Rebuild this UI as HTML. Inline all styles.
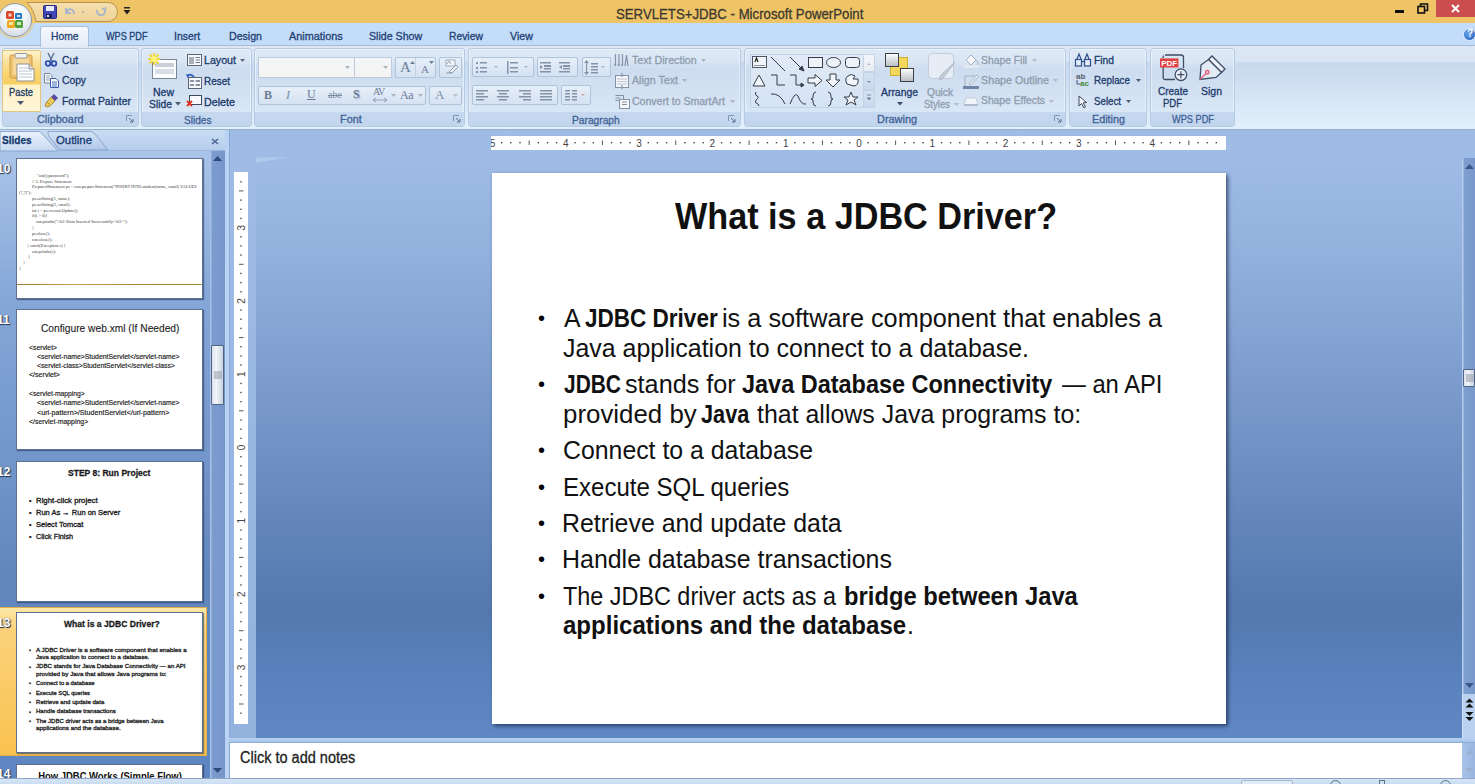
<!DOCTYPE html>
<html><head><meta charset="utf-8">
<style>
*{margin:0;padding:0;box-sizing:border-box}
html,body{width:1475px;height:784px;overflow:hidden;background:#7FA3D6;font-family:"Liberation Sans",sans-serif;position:relative}
.a{position:absolute}
.tx{white-space:nowrap;line-height:1;transform-origin:0 0;-webkit-text-stroke:0.3px currentColor}
svg{position:absolute;overflow:visible}
#title{left:0;top:0;width:1475px;height:23px;background:#EFC466}
#tabs{left:0;top:23px;width:1475px;height:23px;background:#C3DCFA;border-bottom:1px solid #A6BCD6}
#ribbon{left:0;top:46px;width:1475px;height:84px;background:linear-gradient(#DDE7F5 0,#D9E5F4 15px,#C8D9EE 17px,#D3E2F3 55%,#E3F1FC 100%);border-bottom:1px solid #93B0C6}
.grp{top:48px;height:79px;border:1px solid #B5CAE3;border-radius:3px;background:linear-gradient(#DFE9F6 0,#DAE6F4 12px,#CDDCEF 20px,#D3E1F2 45px,#D9E6F5 62px);overflow:hidden;box-shadow:inset 0 0 0 1px rgba(255,255,255,.45)}
.glb{position:absolute;left:0;right:0;bottom:0;height:14px;background:linear-gradient(#C5D8EF,#C1D5EC)}
.box{border:1px solid #AFC3DB;border-radius:2px;background:linear-gradient(#E7EFF9,#D5E2F2)}
#main{left:229px;top:130px;width:1246px;height:608px;background:linear-gradient(#9EBCE6,#93B2DE)}
#inner{left:256px;top:157px;width:1206px;height:581px;background:linear-gradient(#9EBCE6 0,#93B2DE 15%,#7B9BCC 40%,#6688BC 60%,#5479AF 78%,#5A82BD 90%,#6089C4 100%)}
#lpane{left:0;top:130px;width:225px;height:648px;background:linear-gradient(#B0C9EC 0,#86A8D8 25%,#6F93C8 55%,#6287BE 68%,#5E86C2 100%)}
#slide{left:492px;top:173px;width:734px;height:551px;background:#fff;box-shadow:2px 2px 4px rgba(10,25,60,.65)}
.st{left:183px;top:25px;white-space:nowrap;font-size:37.8px;font-weight:bold;color:#111;line-height:1;transform-origin:0 0}
.sl{white-space:nowrap;font-size:25.6px;color:#111;line-height:1;transform-origin:0 0}
.bl{left:46px;font-size:20px;line-height:1;color:#000}
.thumb{left:17px;width:185px;height:139px;background:#fff;box-shadow:0 0 0 1px #5E7192,1px 1px 1px 1px rgba(30,50,90,.55)}
#notes{left:230px;top:743px;width:1232px;height:35px;background:#fff}
#status{left:0;top:778px;width:1475px;height:6px;background:linear-gradient(#D8E6F6,#C9DCF3);border-top:1px solid #8DA6C8}
</style></head><body>
<div id="title" class="a"></div>
<div id="tabs" class="a"></div>
<div id="ribbon" class="a"></div>
<!-- office button -->
<div class="a" style="left:-2px;top:3px;width:34px;height:34px;border-radius:50%;background:radial-gradient(circle at 50% 35%,#FFFFFF 0,#F3F6F9 40%,#D5DCE5 80%,#B8C3D0 100%);border:1px solid #8F98A4;box-shadow:0 0 0 2px rgba(240,200,110,.6)"></div>
<svg style="left:4px;top:9px" width="22" height="22" viewBox="0 0 22 22">
<rect x="2" y="2" width="8" height="8" rx="1.5" fill="#D9472B"/><rect x="4.5" y="4.5" width="3" height="3" fill="#F7D4C2"/>
<rect x="11" y="4" width="7" height="6" rx="1" fill="#2F7CC4"/><rect x="13" y="6" width="3" height="2" fill="#CFE3F5"/>
<rect x="3" y="11" width="8" height="8" rx="1.5" fill="#F2A81C"/><rect x="5" y="13" width="4" height="3" fill="#FBE3A8"/>
<rect x="11" y="11" width="8" height="8" rx="1.5" fill="#4EA23A"/><rect x="13" y="13" width="4" height="3" fill="#CDE9C2"/>
</svg>
<!-- QAT -->
<svg style="left:0;top:0" width="130" height="24" viewBox="0 0 130 24"><defs><linearGradient id="qg" x1="0" y1="0" x2="0" y2="1"><stop offset="0" stop-color="#F6E0AE"/><stop offset="1" stop-color="#EFD297"/></linearGradient></defs><path d="M27 2.5 H108 A9.5 9.5 0 0 1 108 21.5 H36 Q34 9 27 2.5 Z" fill="url(#qg)" stroke="#B99450"/></svg>
<svg style="left:43px;top:5px" width="14" height="14" viewBox="0 0 14 14"><rect x="0.5" y="0.5" width="13" height="13" rx="1" fill="#4447B8" stroke="#2A2C80"/><rect x="3" y="1" width="8" height="5" fill="#E8ECF8"/><rect x="3" y="9" width="6" height="4" fill="#1E2060"/><rect x="4" y="10" width="2" height="2" fill="#DDE"/></svg>
<svg style="left:63px;top:5px" width="14" height="14" viewBox="0 0 14 14"><path d="M3 3 L3 8 L8 8" fill="none" stroke="#A9B6C8" stroke-width="2"/><path d="M3 8 C5 3,11 3,11 9" fill="none" stroke="#A9B6C8" stroke-width="2"/></svg>
<div class="a" style="left:82px;top:11px;width:2px;height:2px;background:#B9B0A0"></div>
<svg style="left:94px;top:5px" width="14" height="14" viewBox="0 0 14 14"><path d="M3 5 C2 12,12 12,11 5" fill="none" stroke="#A9B6C8" stroke-width="2"/><path d="M8 3 L11 5 L12 2" fill="none" stroke="#A9B6C8" stroke-width="1.6"/></svg>
<svg style="left:123px;top:7px" width="8" height="9" viewBox="0 0 8 9"><rect x="1" y="0" width="6" height="1.5" fill="#222"/><path d="M0.5 3 L7.5 3 L4 7.5Z" fill="#222"/></svg>
<!-- window controls -->
<div class="a" style="left:1395px;top:10px;width:9px;height:3px;background:#111"></div>
<svg style="left:1417px;top:3px" width="12" height="11" viewBox="0 0 12 11"><rect x="1" y="3.5" width="6.5" height="6.5" fill="none" stroke="#111" stroke-width="1.6"/><path d="M3.5 3 L3.5 1 L10.5 1 L10.5 7.5 L8 7.5" fill="none" stroke="#111" stroke-width="1.6"/></svg>
<div class="a" style="left:1436px;top:0;width:39px;height:17px;background:#CB4D4D"></div>
<svg style="left:1451px;top:4px" width="9" height="9" viewBox="0 0 9 9"><path d="M1 1 L8 8 M8 1 L1 8" stroke="#fff" stroke-width="2"/></svg>
<!-- help -->
<div class="a" style="left:1463px;top:28px;width:13px;height:13px;border-radius:50%;background:radial-gradient(circle at 40% 35%,#6FA8F0,#1A56B8);border:1px solid #DDE8F6"></div>
<div class="a" style="left:1467px;top:29px;font-size:10px;font-weight:bold;color:#fff;line-height:1">?</div>
<!-- Home tab -->
<div class="a" style="left:40px;top:26px;width:49px;height:21px;border:1px solid #A9C0DA;border-bottom:none;border-radius:3px 3px 0 0;background:linear-gradient(#F6F9FD,#E2EBF7)"></div>
<!-- groups -->
<div class="a grp" style="left:2px;width:137px"><div class="glb"></div></div>
<div class="a grp" style="left:141px;width:111px"><div class="glb"></div></div>
<div class="a grp" style="left:254px;width:211px"><div class="glb"></div></div>
<div class="a grp" style="left:468px;width:273px"><div class="glb"></div></div>
<div class="a grp" style="left:744px;width:322px"><div class="glb"></div></div>
<div class="a grp" style="left:1069px;width:78px"><div class="glb"></div></div>
<div class="a grp" style="left:1150px;width:85px"><div class="glb"></div></div>
<!-- Clipboard icons -->
<div class="a" style="left:2px;top:50px;width:39px;height:62px;border:1px solid #E3C67E;border-radius:2px;background:linear-gradient(#FFF3CC 0,#FBE1A0 10px,#F9D672 22px,#F7CF62 33px,#FFF2C7 34px,#FFF6D8 100%)"></div>
<svg style="left:9px;top:53px" width="26" height="29" viewBox="0 0 26 29">
<rect x="1" y="2" width="22" height="23" rx="1.5" fill="#F0C26E" stroke="#C99A48"/>
<rect x="4" y="5" width="16" height="17" fill="#F6D79C"/>
<rect x="6" y="0.5" width="12" height="4.5" rx="1" fill="#F2F2F2" stroke="#9A9A9A"/>
<path d="M8 11 L20 11 L25 16 L25 28 L8 28 Z" fill="#FFFFFF" stroke="#8F8F8F"/>
<path d="M20 11 L20 16 L25 16" fill="#DDD" stroke="#8F8F8F"/>
<path d="M10 15 H19 M10 18 H23 M10 21 H23 M10 24 H23" stroke="#B8C4D4" stroke-width="1"/>
</svg>
<svg style="left:17px;top:101px" width="7" height="4" viewBox="0 0 7 4"><path d="M0 0 H7 L3.5 4Z" fill="#4A5A70"/></svg>
<svg style="left:45px;top:53px" width="12" height="14" viewBox="0 0 12 14"><path d="M3 0 L7 8 M9 0 L5 8" stroke="#5B6F8C" stroke-width="1.4"/><circle cx="3" cy="10.5" r="2.3" fill="none" stroke="#2F4FB0" stroke-width="1.8"/><circle cx="9" cy="10.5" r="2.3" fill="none" stroke="#2F4FB0" stroke-width="1.8"/></svg>
<svg style="left:44px;top:73px" width="15" height="15" viewBox="0 0 15 15"><path d="M0.5 0.5 H6 L8 2.5 V10 H0.5Z" fill="#F4F6FA" stroke="#7A879A"/><path d="M2 3 H6 M2 5 H6 M2 7 H6" stroke="#9AA6B8"/><path d="M6.5 5.5 H12 L14.5 8 V14.5 H6.5Z" fill="#F8FAFD" stroke="#3A5FA8"/><path d="M8 9 H13 M8 11 H13 M8 13 H13" stroke="#4A6FB8"/></svg>
<svg style="left:44px;top:93px" width="15" height="15" viewBox="0 0 15 15"><path d="M10 1 L14 5 L11 8 L7 4Z" fill="#5B4AA8"/><path d="M7 4 L11 8 L6 13 Q3 15 1 13 L2 10Z" fill="#E8C85A" stroke="#9A7A2A" stroke-width=".8"/><path d="M3 9 L7 13" stroke="#B89530"/></svg>
<!-- dialog launchers -->
<svg style="left:126px;top:115px" width="8" height="8" viewBox="0 0 8 8"><path d="M0.5 6 V0.5 H6" fill="none" stroke="#8096B5"/><path d="M3 3 L7 7 M4 7 H7 V4" fill="none" stroke="#5C7394"/></svg>
<svg style="left:453px;top:115px" width="8" height="8" viewBox="0 0 8 8"><path d="M0.5 6 V0.5 H6" fill="none" stroke="#8096B5"/><path d="M3 3 L7 7 M4 7 H7 V4" fill="none" stroke="#5C7394"/></svg>
<svg style="left:728px;top:115px" width="8" height="8" viewBox="0 0 8 8"><path d="M0.5 6 V0.5 H6" fill="none" stroke="#8096B5"/><path d="M3 3 L7 7 M4 7 H7 V4" fill="none" stroke="#5C7394"/></svg>
<svg style="left:1054px;top:115px" width="8" height="8" viewBox="0 0 8 8"><path d="M0.5 6 V0.5 H6" fill="none" stroke="#8096B5"/><path d="M3 3 L7 7 M4 7 H7 V4" fill="none" stroke="#5C7394"/></svg>
<!-- Slides icons -->
<svg style="left:148px;top:53px" width="30" height="27" viewBox="0 0 30 27">
<rect x="4.5" y="6.5" width="24" height="19" fill="#FBFCFE" stroke="#7C8696"/>
<rect x="7" y="10" width="19" height="4" fill="#C9CFD8"/><rect x="7" y="16" width="19" height="5" fill="#D9DEE5"/>
<path d="M6 0 L6 12 M0 6 L12 6 M1.5 1.5 L10.5 10.5 M10.5 1.5 L1.5 10.5" stroke="#F2D33A" stroke-width="2"/>
<circle cx="6" cy="6" r="3" fill="#FFF27A"/>
</svg>
<svg style="left:175px;top:102px" width="6" height="4" viewBox="0 0 6 4"><path d="M0 0 H6 L3 3.5Z" fill="#4A5A70"/></svg>
<svg style="left:187px;top:54px" width="15" height="13" viewBox="0 0 15 13"><rect x="0.5" y="0.5" width="14" height="11" fill="#F7F9FC" stroke="#5A6678"/><rect x="2" y="3" width="5" height="7" fill="#A8B0BC"/><path d="M8.5 3.5 H13 M8.5 6 H13 M8.5 8.5 H13" stroke="#6F7A8A"/></svg>
<svg style="left:240px;top:59px" width="5" height="3" viewBox="0 0 5 3"><path d="M0 0 H5 L2.5 3Z" fill="#5A6A80"/></svg>
<svg style="left:186px;top:73px" width="16" height="16" viewBox="0 0 16 16"><rect x="2.5" y="4.5" width="13" height="11" fill="#F7F9FC" stroke="#5A6678"/><path d="M4 8 H8 M9.5 8 H14 M4 12 H8 M9.5 12 H14" stroke="#8A94A2" stroke-width="2"/><path d="M1 3 Q4 0 8 4" fill="none" stroke="#3763C0" stroke-width="1.8"/><path d="M0 1 L1.5 5 L4 2Z" fill="#3763C0"/></svg>
<svg style="left:186px;top:95px" width="16" height="12" viewBox="0 0 16 12"><rect x="3.5" y="0.5" width="12" height="9" fill="#F7F9FC" stroke="#3F4A5C"/><path d="M1 6 L6 11 M6 6 L1 11" stroke="#E0301E" stroke-width="1.8"/></svg>
<!-- Font group -->
<div class="a" style="left:258px;top:57px;width:97px;height:21px;border:1px solid #BCCBDD;background:linear-gradient(#F3F5F8,#F6F4F2)"></div>
<div class="a" style="left:354px;top:57px;width:38px;height:21px;border:1px solid #BCCBDD;background:linear-gradient(#F3F5F8,#F6F4F2)"></div>
<svg style="left:345px;top:66px" width="5" height="3" viewBox="0 0 5 3"><path d="M0 0 H5 L2.5 3Z" fill="#A9B4C2"/></svg>
<svg style="left:383px;top:66px" width="5" height="3" viewBox="0 0 5 3"><path d="M0 0 H5 L2.5 3Z" fill="#A9B4C2"/></svg>
<div class="a box" style="left:395px;top:57px;width:41px;height:21px"></div>
<div class="a" style="left:415px;top:58px;width:1px;height:19px;background:#C5D3E4"></div>
<div class="a box" style="left:439px;top:57px;width:23px;height:21px"></div>
<div class="a" style="left:400px;top:60px;font-family:'Liberation Serif';font-size:15px;color:#6E7F98;line-height:1">A</div>
<svg style="left:410px;top:61px" width="5" height="3" viewBox="0 0 5 3"><path d="M0 3 H5 L2.5 0Z" fill="#6E7F98"/></svg>
<div class="a" style="left:421px;top:64px;font-family:'Liberation Serif';font-size:11px;color:#6E7F98;line-height:1">A</div>
<svg style="left:429px;top:61px" width="5" height="3" viewBox="0 0 5 3"><path d="M0 0 H5 L2.5 3Z" fill="#6E7F98"/></svg>
<svg style="left:443px;top:59px" width="16" height="16" viewBox="0 0 16 16"><rect x="3" y="1" width="9" height="6" fill="#F5F7FA" stroke="#8C9AB0" stroke-width=".8"/><path d="M4 5 L6 2 L8 5" fill="none" stroke="#7F8EA5" stroke-width=".8"/><path d="M6 13 L13 6 L15 8 L9 14Z" fill="#EEF2F8" stroke="#8C9AB0"/><path d="M3 14 H9" stroke="#8C9AB0"/></svg>
<div class="a box" style="left:258px;top:86px;width:168px;height:19px"></div>
<div class="a box" style="left:429px;top:86px;width:33px;height:19px"></div>
<div class="a" style="left:264px;top:89px;font-family:'Liberation Serif';font-weight:bold;font-size:12px;color:#6A7B94;line-height:1">B</div>
<div class="a" style="left:286px;top:89px;font-family:'Liberation Serif';font-style:italic;font-size:12px;color:#7A8AA2;line-height:1">I</div>
<div class="a" style="left:307px;top:88px;font-family:'Liberation Serif';font-size:12px;color:#6A7B94;line-height:1;text-decoration:underline">U</div>
<div class="a" style="left:328px;top:90px;font-family:'Liberation Serif';font-size:10px;color:#7A8AA2;line-height:1;text-decoration:line-through">abe</div>
<div class="a" style="left:353px;top:88px;font-family:'Liberation Serif';font-weight:bold;font-size:12px;color:#6A7B94;line-height:1;text-shadow:1px 1px 1px #9AA8BC">S</div>
<div class="a" style="left:373px;top:87px;font-family:'Liberation Serif';font-size:10px;color:#6A7B94;line-height:1;letter-spacing:-1px">AV</div>
<svg style="left:373px;top:98px" width="14" height="4" viewBox="0 0 14 4"><path d="M0 2 H14 M0 2 L3 0 M0 2 L3 4 M14 2 L11 0 M14 2 L11 4" stroke="#8A98AE" stroke-width=".8"/></svg>
<svg style="left:391px;top:94px" width="5" height="3" viewBox="0 0 5 3"><path d="M0 0 H5 L2.5 3Z" fill="#A9B4C2"/></svg>
<div class="a" style="left:400px;top:89px;font-family:'Liberation Serif';font-size:12px;color:#6A7B94;line-height:1;letter-spacing:-.5px">Aa</div>
<svg style="left:418px;top:94px" width="5" height="3" viewBox="0 0 5 3"><path d="M0 0 H5 L2.5 3Z" fill="#A9B4C2"/></svg>
<div class="a" style="left:435px;top:88px;font-family:'Liberation Serif';font-size:13px;color:#7E8EA6;line-height:1">A</div>
<svg style="left:453px;top:94px" width="5" height="3" viewBox="0 0 5 3"><path d="M0 0 H5 L2.5 3Z" fill="#B8C2CE"/></svg>
<!-- Paragraph group -->
<div class="a box" style="left:472px;top:57px;width:62px;height:20px"></div>
<div class="a box" style="left:537px;top:57px;width:41px;height:20px"></div>
<div class="a box" style="left:582px;top:57px;width:29px;height:20px"></div>
<div class="a box" style="left:472px;top:85px;width:86px;height:20px"></div>
<div class="a box" style="left:561px;top:85px;width:30px;height:20px"></div>
<svg style="left:476px;top:60px" width="140" height="16" viewBox="0 0 140 16" fill="#8593A8">
<rect x="0" y="2" width="2" height="2"/><rect x="0" y="7" width="2" height="2"/><rect x="0" y="11" width="2" height="2"/>
<rect x="4" y="2" width="7" height="1.5"/><rect x="4" y="7" width="7" height="1.5"/><rect x="4" y="11" width="7" height="1.5"/>
<path d="M18 6 H22 L20 8Z" fill="#A8B4C4"/>
<rect x="31" y="1" width="1.5" height="13"/>
<rect x="34" y="2" width="8" height="1.5"/><rect x="34" y="7" width="8" height="1.5"/><rect x="34" y="11" width="8" height="1.5"/>
<path d="M48 6 H52 L50 8Z" fill="#A8B4C4"/>
<rect x="64" y="2" width="11" height="1.5"/><rect x="68" y="5" width="7" height="2"/><rect x="68" y="8" width="7" height="1.5"/><rect x="64" y="11" width="11" height="1.5"/><path d="M64 5 L67 7 L64 9Z"/>
<rect x="83" y="2" width="11" height="1.5"/><rect x="87" y="5" width="7" height="2"/><rect x="87" y="8" width="7" height="1.5"/><rect x="83" y="11" width="11" height="1.5"/><path d="M86 5 L83 7 L86 9Z"/>
<rect x="110" y="1" width="1.2" height="13"/><path d="M108 3 L110.6 0 L113 3Z M108 12 L110.6 15 L113 12Z"/>
<rect x="115" y="3" width="7" height="1.5"/><rect x="115" y="6" width="7" height="1.5"/><rect x="115" y="9" width="7" height="1.5"/><rect x="115" y="12" width="7" height="1.5"/>
<path d="M125 6 H129 L127 8Z" fill="#A8B4C4"/>
</svg>
<svg style="left:476px;top:88px" width="115" height="15" viewBox="0 0 115 15" fill="#8593A8">
<rect x="0" y="2" width="12" height="1.5"/><rect x="0" y="5" width="8" height="1.5"/><rect x="0" y="8" width="12" height="1.5"/><rect x="0" y="11" width="8" height="1.5"/>
<rect x="21" y="2" width="12" height="1.5"/><rect x="23" y="5" width="8" height="1.5"/><rect x="21" y="8" width="12" height="1.5"/><rect x="23" y="11" width="8" height="1.5"/>
<rect x="43" y="2" width="12" height="1.5"/><rect x="47" y="5" width="8" height="1.5"/><rect x="43" y="8" width="12" height="1.5"/><rect x="47" y="11" width="8" height="1.5"/>
<rect x="64" y="2" width="12" height="1.5"/><rect x="64" y="5" width="12" height="1.5"/><rect x="64" y="8" width="12" height="1.5"/><rect x="64" y="11" width="12" height="1.5"/>
<rect x="89" y="2" width="5" height="1.5"/><rect x="89" y="5" width="5" height="1.5"/><rect x="89" y="8" width="5" height="1.5"/><rect x="89" y="11" width="5" height="1.5"/>
<rect x="96" y="2" width="5" height="1.5"/><rect x="96" y="5" width="5" height="1.5"/><rect x="96" y="8" width="5" height="1.5"/><rect x="96" y="11" width="5" height="1.5"/>
<path d="M105 6 H109 L107 8Z" fill="#C8A0A0"/>
</svg>
<svg style="left:614px;top:53px" width="16" height="56" viewBox="0 0 16 56" fill="none" stroke="#8593A8">
<path d="M1.5 1 V13 M5 1 V13 M8.5 1 V13 M1.5 13 l-1 -2 M5 13 l-1 -2 M8.5 13 l-1 -2" stroke-width="1.2"/><path d="M11 13 L12.5 2 L14 13" stroke-width="1.2"/>
<rect x="1.5" y="22.5" width="13" height="12" fill="#F5F7FA"/><path d="M3.5 26 H12.5 M3.5 28.5 H12.5 M3.5 31 H12.5" stroke-dasharray="1 1"/><path d="M8 20 V24 M8 32 V36" stroke-width="1.2"/>
<rect x="5.5" y="46.5" width="10" height="9" fill="#F5F7FA"/><path d="M1.5 42.5 H9.5 V46 M1.5 45 H6 M1.5 47.5 H5" /><path d="M8 49 H13 M8 51.5 H13"/>
</svg>
<svg style="left:701px;top:59px" width="5" height="3" viewBox="0 0 5 3"><path d="M0 0 H5 L2.5 3Z" fill="#A9B4C2"/></svg>
<svg style="left:682px;top:79px" width="5" height="3" viewBox="0 0 5 3"><path d="M0 0 H5 L2.5 3Z" fill="#A9B4C2"/></svg>
<svg style="left:730px;top:100px" width="5" height="3" viewBox="0 0 5 3"><path d="M0 0 H5 L2.5 3Z" fill="#A9B4C2"/></svg>
<!-- Drawing group -->
<div class="a" style="left:750px;top:54px;width:125px;height:54px;border:1px solid #C3D3E6;background:linear-gradient(#E1EAF6,#D5E3F3)"></div>
<div class="a" style="left:863px;top:54px;width:12px;height:18px;background:linear-gradient(#F4F6F9,#E8EDF3);border:1px solid #C8D5E5"></div>
<div class="a" style="left:863px;top:72px;width:12px;height:18px;background:linear-gradient(#D4E1F1,#C9D9EE);border:1px solid #C3D3E6"></div>
<div class="a" style="left:863px;top:90px;width:12px;height:18px;background:linear-gradient(#D4E1F1,#C9D9EE);border:1px solid #C3D3E6"></div>
<svg style="left:866px;top:62px" width="6" height="40" viewBox="0 0 6 40"><path d="M1 3 H5 L3 1Z" fill="#B0BCCB"/><path d="M1 19 H5 L3 21Z" fill="#7E8DA3"/><path d="M1 33 H5 M1 36 H5 L3 38Z" stroke="#7E8DA3" fill="#7E8DA3"/></svg>
<svg style="left:750px;top:54px" width="112" height="54" viewBox="0 0 112 54" fill="none" stroke="#333C48" stroke-width="1">
<rect x="2.5" y="2.5" width="14" height="11" fill="#F2F5FA" stroke="#4A5566"/><path d="M4 11.5 H15" stroke="#8A94A2"/><path d="M5 8 L6.5 4 L8 8" stroke="#222" stroke-width="1.2"/>
<path d="M21 3 L35 17"/>
<path d="M40 3 L52 15"/><path d="M49 15 L54 17 L52 12Z" fill="#333C48"/>
<rect x="58.5" y="3.5" width="14" height="10" fill="#EEF3F9"/>
<ellipse cx="83.5" cy="8.5" rx="7" ry="5" fill="#EEF3F9"/>
<rect x="95.5" y="3.5" width="14" height="10" rx="3" fill="#EEF3F9"/>
<path d="M3 32 L9 21 L15 32Z" fill="#F2F5FA"/>
<path d="M21 21 H27 V31 H35"/>
<path d="M40 21 H46 V31 H52"/><path d="M51 29 L54 31 L51 33Z" fill="#333C48"/>
<path d="M58 24 H65 V20.5 L72 26.5 L65 32.5 V29 H58Z" fill="#F2F5FA"/>
<path d="M80 20 H86 V26 H90 L83 33 L76 26 H80Z" fill="#F2F5FA"/>
<path d="M97 30 Q94 24 98 22 Q101 19 105 22 L103 25 L108 25 Q109 31 104 32Z" fill="#F2F5FA"/>
<path d="M6 38 Q4 41 7 42 Q10 43 6 46 Q4 49 8 50 M8 50 L9 52"/>
<path d="M21 40 Q30 39 35 50"/>
<path d="M40 50 Q45 37 48 42 Q51 51 56 50"/>
<path d="M66 38 Q63 38 63 42 V44 L61 45 L63 46 V48 Q63 52 66 52"/>
<path d="M78 38 Q81 38 81 42 V44 L83 45 L81 46 V48 Q81 52 78 52"/>
<path d="M101 38 L103 43 L108 43 L104 46 L106 51 L101 48 L96 51 L98 46 L94 43 L99 43Z" fill="#F2F5FA"/>
</svg>
<svg style="left:884px;top:52px" width="32" height="31" viewBox="0 0 32 31">
<rect x="6.5" y="5.5" width="17" height="18" fill="#F5D65C" stroke="#D1AE2E"/>
<rect x="1.5" y="1.5" width="13" height="13" fill="url(#gg)" stroke="#3A3F46"/>
<rect x="16.5" y="16.5" width="13" height="13" fill="url(#gg)" stroke="#3A3F46"/>
<defs><linearGradient id="gg" x1="0" y1="0" x2="0" y2="1"><stop offset="0" stop-color="#FDFDFD"/><stop offset="1" stop-color="#B9BEC5"/></linearGradient></defs>
</svg>
<svg style="left:897px;top:102px" width="6" height="4" viewBox="0 0 6 4"><path d="M0 0 H6 L3 3.5Z" fill="#3A4C6A"/></svg>
<svg style="left:927px;top:52px" width="30" height="30" viewBox="0 0 30 30"><rect x="1.5" y="1.5" width="25" height="25" rx="4" fill="#E6EDF6" stroke="#C3CDDA"/><path d="M28 10 L17 25 L14 28 L12 27 L14 23Z" fill="#C4CCD8" stroke="#B3BCCA"/></svg>
<svg style="left:954px;top:103px" width="5" height="3" viewBox="0 0 5 3"><path d="M0 0 H5 L2.5 3Z" fill="#B3BDCA"/></svg>
<svg style="left:963px;top:53px" width="18" height="56" viewBox="0 0 18 56" fill="none" stroke="#A3AFC0">
<path d="M3 7 L8 2 L13 7 L8 12Z" fill="#F3F6FA"/><path d="M13 7 Q16 9 15 12" /><rect x="1" y="12" width="15" height="3" fill="#E4EAF2" stroke="none"/>
<path d="M2 33 V23 H12" /><path d="M6 31 L14 22 L15.5 23.5 L7.5 32Z" fill="#F3F6FA"/><rect x="0" y="33" width="16" height="3" fill="#6E85A5" stroke="none"/>
<path d="M1 52 L3 45 H13 L15 52Z" fill="#F1F4F8" stroke="#C5CEDA"/><path d="M1 52 H15" stroke="#AFBACA" stroke-width="2"/>
</svg>
<svg style="left:1032px;top:59px" width="5" height="3" viewBox="0 0 5 3"><path d="M0 0 H5 L2.5 3Z" fill="#B3BDCA"/></svg>
<svg style="left:1053px;top:79px" width="5" height="3" viewBox="0 0 5 3"><path d="M0 0 H5 L2.5 3Z" fill="#B3BDCA"/></svg>
<svg style="left:1049px;top:100px" width="5" height="3" viewBox="0 0 5 3"><path d="M0 0 H5 L2.5 3Z" fill="#B3BDCA"/></svg>
<!-- Editing -->
<svg style="left:1075px;top:53px" width="16" height="14" viewBox="0 0 16 14" fill="none" stroke="#2E4D8A" stroke-width="1.2"><path d="M2 6 L4 1 L6 6 M10 6 L12 1 L14 6"/><rect x="0.5" y="6.5" width="6" height="6.5" fill="#E3ECF8"/><rect x="9.5" y="6.5" width="6" height="6.5" fill="#E3ECF8"/><path d="M6.5 8.5 H9.5"/></svg>
<div class="a" style="left:1076px;top:73px;font-size:8px;color:#4F5A6A;line-height:1;font-weight:bold">ab</div>
<div class="a" style="left:1080px;top:80px;font-size:8px;color:#3E8A3A;line-height:1;font-weight:bold">ac</div>
<svg style="left:1076px;top:80px" width="5" height="6" viewBox="0 0 5 6"><path d="M1 0 V4 H4" stroke="#3E5A8A" fill="none"/></svg>
<svg style="left:1136px;top:79px" width="5" height="3" viewBox="0 0 5 3"><path d="M0 0 H5 L2.5 3Z" fill="#4A5A72"/></svg>
<svg style="left:1078px;top:95px" width="10" height="14" viewBox="0 0 10 14"><path d="M1 1 L1 11 L3.5 8.5 L6 13 L7.5 12 L5.2 7.8 L8.5 7.5Z" fill="#F6F8FB" stroke="#3B4656"/></svg>
<svg style="left:1126px;top:100px" width="5" height="3" viewBox="0 0 5 3"><path d="M0 0 H5 L2.5 3Z" fill="#4A5A72"/></svg>
<!-- WPS PDF -->
<svg style="left:1155px;top:50px" width="75" height="35" viewBox="0 0 75 35" fill="none" stroke="#3E4D66" stroke-width="1.3">
<path d="M10 5 H26 Q28.5 5 28.5 7.5 V18"/><path d="M8.2 17 V28 Q8.2 29.5 10 29.5 H20"/><path d="M8.2 5.5 V8"/>
<rect x="5" y="8.4" width="18.4" height="9.1" fill="#DF4242" stroke="none"/>
<text x="6.2" y="16.2" font-family="Liberation Sans" font-size="8" font-weight="bold" fill="#fff" stroke="none">PDF</text>
<circle cx="25.9" cy="24.7" r="5.8" fill="#E8EFF8"/><path d="M25.9 21.2 V28.2 M22.4 24.7 H29.4" stroke-width="1.2"/>
<path d="M53.5 9.5 L57 6 L70 19 L66.5 22.5Z" fill="#EDF2F9"/>
<path d="M53.5 9.5 L66.5 22.5 L61 27.5 L45 29.5 L46 15 Z" fill="#E3EBF5"/>
<path d="M45 29.5 L51 23.5" stroke="#E3607A"/><circle cx="52.3" cy="22.2" r="1.8" stroke="#E3607A" fill="#F5C6D0"/>
</svg>

<div id="lpane" class="a"></div>
<div id="main" class="a"></div>
<div id="inner" class="a"></div>
<!-- left pane header -->
<div class="a" style="left:0;top:130px;width:225px;height:21px;background:linear-gradient(#C9DCF3,#B6CEEC);border-bottom:1px solid #9DB8DD"></div>
<svg style="left:0;top:130px" width="225" height="21" viewBox="0 0 225 21">
<path d="M48 1.5 H90 Q93 1.5 95 4 L108 20 H60 L50 8 Q48 5 48 3Z" fill="url(#og)" stroke="#8AA6CC"/>
<path d="M0 1.5 H40 L58 21 H0Z" fill="url(#sg)" stroke="#8AA6CC"/>
<defs><linearGradient id="sg" x1="0" y1="0" x2="0" y2="1"><stop offset="0" stop-color="#EAF2FC"/><stop offset="1" stop-color="#C8DAF1"/></linearGradient>
<linearGradient id="og" x1="0" y1="0" x2="0" y2="1"><stop offset="0" stop-color="#D3E2F5"/><stop offset="1" stop-color="#AFC7E7"/></linearGradient></defs>
</svg>
<svg style="left:211px;top:138px" width="8" height="7" viewBox="0 0 8 7"><path d="M1 1 L7 6 M7 1 L1 6" stroke="#4A6796" stroke-width="1.6"/></svg>
<!-- pane content bg -->
<!-- pane scrollbar -->
<div class="a" style="left:210px;top:151px;width:15px;height:627px;background:linear-gradient(90deg,#A7C1E6 0,#A7C1E6 1px,#7C9CCF 2px,#7696CA 100%)"></div>
<svg style="left:213px;top:156px" width="9" height="5" viewBox="0 0 9 5"><path d="M0 5 L4.5 0 L9 5Z" fill="#2F4A78"/></svg>
<svg style="left:213px;top:768px" width="9" height="5" viewBox="0 0 9 5"><path d="M0 0 L4.5 5 L9 0Z" fill="#2F4A78"/></svg>
<div class="a" style="left:211px;top:345px;width:13px;height:60px;border:1px solid #4F6488;border-radius:1px;background:linear-gradient(90deg,#DDE3EC,#F2F5F9 40%,#C8D2DF)"></div>
<svg style="left:214px;top:371px" width="8" height="8" viewBox="0 0 8 8"><path d="M0 1 H8 M0 3 H8 M0 5 H8 M0 7 H8" stroke="#8C96A6"/></svg>
<!-- strip -->
<div class="a" style="left:225px;top:130px;width:4px;height:648px;background:#BAD3F2"></div>
<div class="a" style="left:229px;top:130px;width:1px;height:608px;background:#88A8D6"></div>
<!-- selection highlight -->
<div class="a" style="left:0;top:607px;width:207px;height:149px;background:linear-gradient(#FDE7A6 0,#FBD27A 15%,#F9C24F 100%);border:1px solid #E2AE4A;border-left:none"></div>
<!-- thumbnails -->
<div class="a thumb" style="top:159px;overflow:hidden">
<div class="a" style="left:0;top:124.5px;width:185px;height:1.6px;background:linear-gradient(90deg,#9C7A3A,#C9A052 30%,#B08A40 60%,#A88A48)"></div>
<div class="a" style="left:19.8px;top:13.5px;font-family:'Liberation Serif';font-size:5px;line-height:1;color:#3a3a3a;white-space:nowrap;transform:scaleX(.867);transform-origin:0 0">"out();password");</div>
<div class="a" style="left:15.0px;top:19.8px;font-family:'Liberation Serif';font-size:5px;line-height:1;color:#3a3a3a;white-space:nowrap;transform:scaleX(.867);transform-origin:0 0">// 3. Prepare Statement</div>
<div class="a" style="left:15.0px;top:25.3px;font-family:'Liberation Serif';font-size:5px;line-height:1;color:#3a3a3a;white-space:nowrap;transform:scaleX(.867);transform-origin:0 0">PreparedStatement ps = con.prepareStatement("INSERT INTO student(name, email) VALUES</div>
<div class="a" style="left:1.6px;top:31.3px;font-family:'Liberation Serif';font-size:5px;line-height:1;color:#3a3a3a;white-space:nowrap;transform:scaleX(.867);transform-origin:0 0">(?,?)");</div>
<div class="a" style="left:15.0px;top:37.4px;font-family:'Liberation Serif';font-size:5px;line-height:1;color:#3a3a3a;white-space:nowrap;transform:scaleX(.867);transform-origin:0 0">ps.setString(1, name);</div>
<div class="a" style="left:15.0px;top:43.1px;font-family:'Liberation Serif';font-size:5px;line-height:1;color:#3a3a3a;white-space:nowrap;transform:scaleX(.867);transform-origin:0 0">ps.setString(2, email);</div>
<div class="a" style="left:15.0px;top:48.9px;font-family:'Liberation Serif';font-size:5px;line-height:1;color:#3a3a3a;white-space:nowrap;transform:scaleX(.867);transform-origin:0 0">int i = ps.executeUpdate();</div>
<div class="a" style="left:15.0px;top:54.2px;font-family:'Liberation Serif';font-size:5px;line-height:1;color:#3a3a3a;white-space:nowrap;transform:scaleX(.867);transform-origin:0 0">if(i &gt; 0){</div>
<div class="a" style="left:18.8px;top:60.3px;font-family:'Liberation Serif';font-size:5px;line-height:1;color:#3a3a3a;white-space:nowrap;transform:scaleX(.867);transform-origin:0 0">out.println("&lt;h3&gt;Data Inserted Successfully&lt;/h3&gt;");</div>
<div class="a" style="left:15.0px;top:66.1px;font-family:'Liberation Serif';font-size:5px;line-height:1;color:#3a3a3a;white-space:nowrap;transform:scaleX(.867);transform-origin:0 0">}</div>
<div class="a" style="left:15.0px;top:71.8px;font-family:'Liberation Serif';font-size:5px;line-height:1;color:#3a3a3a;white-space:nowrap;transform:scaleX(.867);transform-origin:0 0">ps.close();</div>
<div class="a" style="left:15.0px;top:77.9px;font-family:'Liberation Serif';font-size:5px;line-height:1;color:#3a3a3a;white-space:nowrap;transform:scaleX(.867);transform-origin:0 0">con.close();</div>
<div class="a" style="left:10.2px;top:83.7px;font-family:'Liberation Serif';font-size:5px;line-height:1;color:#3a3a3a;white-space:nowrap;transform:scaleX(.867);transform-origin:0 0">} catch(Exception e) {</div>
<div class="a" style="left:15.0px;top:89.6px;font-family:'Liberation Serif';font-size:5px;line-height:1;color:#3a3a3a;white-space:nowrap;transform:scaleX(.867);transform-origin:0 0">out.println(e);</div>
<div class="a" style="left:10.6px;top:95.4px;font-family:'Liberation Serif';font-size:5px;line-height:1;color:#3a3a3a;white-space:nowrap;transform:scaleX(.867);transform-origin:0 0">}</div>
<div class="a" style="left:6.0px;top:101.1px;font-family:'Liberation Serif';font-size:5px;line-height:1;color:#3a3a3a;white-space:nowrap;transform:scaleX(.867);transform-origin:0 0">}</div>
<div class="a" style="left:1.6px;top:106.8px;font-family:'Liberation Serif';font-size:5px;line-height:1;color:#3a3a3a;white-space:nowrap;transform:scaleX(.867);transform-origin:0 0">}</div>
</div>
<div class="a thumb" style="top:310px;overflow:hidden"></div>
<div class="a thumb" style="top:462px;overflow:hidden"></div>
<div class="a thumb" style="top:613px;overflow:hidden"></div>
<div class="a thumb" style="top:765px;height:20px;overflow:hidden">
<div class="a" style="left:0;top:6px;width:186px;text-align:center;font-size:10.5px;font-weight:bold;color:#111;line-height:1;transform:scaleX(.9)">How JDBC Works (Simple Flow)</div>
</div>
<!-- slide numbers -->
<div class="a" style="left:-3px;top:163px;font-size:12px;font-weight:bold;color:#fff;line-height:1;-webkit-text-stroke:0;text-shadow:1px 1px 1px #22334F,0 0 1px #334A70">10</div>
<div class="a" style="left:-3px;top:314px;font-size:12px;font-weight:bold;color:#fff;line-height:1;-webkit-text-stroke:0;text-shadow:1px 1px 1px #22334F,0 0 1px #334A70">11</div>
<div class="a" style="left:-3px;top:466px;font-size:12px;font-weight:bold;color:#fff;line-height:1;-webkit-text-stroke:0;text-shadow:1px 1px 1px #22334F,0 0 1px #334A70">12</div>
<div class="a" style="left:-3px;top:617px;font-size:12px;font-weight:bold;color:#fff;line-height:1;-webkit-text-stroke:0;text-shadow:1px 1px 1px #22334F,0 0 1px #334A70">13</div>
<div class="a" style="left:-3px;top:768px;font-size:12px;font-weight:bold;color:#fff;line-height:1;-webkit-text-stroke:0;text-shadow:1px 1px 1px #22334F,0 0 1px #334A70">14</div>

<!-- rulers -->
<div class="a" style="left:491px;top:136px;width:735px;height:14px;background:#fff"></div>
<div class="a" style="left:234px;top:172px;width:14px;height:552px;background:#fff"></div>
<svg style="left:491px;top:136px;overflow:hidden" width="735" height="14" viewBox="0 0 735 14" id="hr"><text x="1.5" y="10.5" font-family="Liberation Sans" font-size="10" fill="#444" text-anchor="middle">5</text><rect x="10.0" y="6" width="1.4" height="1.4" fill="#444"/><rect x="19.1" y="6" width="1.4" height="1.4" fill="#444"/><rect x="28.3" y="6" width="1.4" height="1.4" fill="#444"/><rect x="37.7" y="4.5" width="1" height="4.5" fill="#555"/><rect x="46.6" y="6" width="1.4" height="1.4" fill="#444"/><rect x="55.8" y="6" width="1.4" height="1.4" fill="#444"/><rect x="64.9" y="6" width="1.4" height="1.4" fill="#444"/><text x="74.8" y="10.5" font-family="Liberation Sans" font-size="10" fill="#444" text-anchor="middle">4</text><rect x="83.3" y="6" width="1.4" height="1.4" fill="#444"/><rect x="92.4" y="6" width="1.4" height="1.4" fill="#444"/><rect x="101.6" y="6" width="1.4" height="1.4" fill="#444"/><rect x="110.9" y="4.5" width="1" height="4.5" fill="#555"/><rect x="119.9" y="6" width="1.4" height="1.4" fill="#444"/><rect x="129.1" y="6" width="1.4" height="1.4" fill="#444"/><rect x="138.2" y="6" width="1.4" height="1.4" fill="#444"/><text x="148.1" y="10.5" font-family="Liberation Sans" font-size="10" fill="#444" text-anchor="middle">3</text><rect x="156.6" y="6" width="1.4" height="1.4" fill="#444"/><rect x="165.7" y="6" width="1.4" height="1.4" fill="#444"/><rect x="174.9" y="6" width="1.4" height="1.4" fill="#444"/><rect x="184.2" y="4.5" width="1" height="4.5" fill="#555"/><rect x="193.2" y="6" width="1.4" height="1.4" fill="#444"/><rect x="202.4" y="6" width="1.4" height="1.4" fill="#444"/><rect x="211.5" y="6" width="1.4" height="1.4" fill="#444"/><text x="221.4" y="10.5" font-family="Liberation Sans" font-size="10" fill="#444" text-anchor="middle">2</text><rect x="229.9" y="6" width="1.4" height="1.4" fill="#444"/><rect x="239.0" y="6" width="1.4" height="1.4" fill="#444"/><rect x="248.2" y="6" width="1.4" height="1.4" fill="#444"/><rect x="257.6" y="4.5" width="1" height="4.5" fill="#555"/><rect x="266.5" y="6" width="1.4" height="1.4" fill="#444"/><rect x="275.7" y="6" width="1.4" height="1.4" fill="#444"/><rect x="284.8" y="6" width="1.4" height="1.4" fill="#444"/><text x="294.7" y="10.5" font-family="Liberation Sans" font-size="10" fill="#444" text-anchor="middle">1</text><rect x="303.2" y="6" width="1.4" height="1.4" fill="#444"/><rect x="312.3" y="6" width="1.4" height="1.4" fill="#444"/><rect x="321.5" y="6" width="1.4" height="1.4" fill="#444"/><rect x="330.9" y="4.5" width="1" height="4.5" fill="#555"/><rect x="339.8" y="6" width="1.4" height="1.4" fill="#444"/><rect x="349.0" y="6" width="1.4" height="1.4" fill="#444"/><rect x="358.1" y="6" width="1.4" height="1.4" fill="#444"/><text x="368.0" y="10.5" font-family="Liberation Sans" font-size="10" fill="#444" text-anchor="middle">0</text><rect x="376.5" y="6" width="1.4" height="1.4" fill="#444"/><rect x="385.6" y="6" width="1.4" height="1.4" fill="#444"/><rect x="394.8" y="6" width="1.4" height="1.4" fill="#444"/><rect x="404.1" y="4.5" width="1" height="4.5" fill="#555"/><rect x="413.1" y="6" width="1.4" height="1.4" fill="#444"/><rect x="422.3" y="6" width="1.4" height="1.4" fill="#444"/><rect x="431.4" y="6" width="1.4" height="1.4" fill="#444"/><text x="441.3" y="10.5" font-family="Liberation Sans" font-size="10" fill="#444" text-anchor="middle">1</text><rect x="449.8" y="6" width="1.4" height="1.4" fill="#444"/><rect x="458.9" y="6" width="1.4" height="1.4" fill="#444"/><rect x="468.1" y="6" width="1.4" height="1.4" fill="#444"/><rect x="477.4" y="4.5" width="1" height="4.5" fill="#555"/><rect x="486.4" y="6" width="1.4" height="1.4" fill="#444"/><rect x="495.6" y="6" width="1.4" height="1.4" fill="#444"/><rect x="504.7" y="6" width="1.4" height="1.4" fill="#444"/><text x="514.6" y="10.5" font-family="Liberation Sans" font-size="10" fill="#444" text-anchor="middle">2</text><rect x="523.1" y="6" width="1.4" height="1.4" fill="#444"/><rect x="532.2" y="6" width="1.4" height="1.4" fill="#444"/><rect x="541.4" y="6" width="1.4" height="1.4" fill="#444"/><rect x="550.8" y="4.5" width="1" height="4.5" fill="#555"/><rect x="559.7" y="6" width="1.4" height="1.4" fill="#444"/><rect x="568.9" y="6" width="1.4" height="1.4" fill="#444"/><rect x="578.0" y="6" width="1.4" height="1.4" fill="#444"/><text x="587.9" y="10.5" font-family="Liberation Sans" font-size="10" fill="#444" text-anchor="middle">3</text><rect x="596.4" y="6" width="1.4" height="1.4" fill="#444"/><rect x="605.5" y="6" width="1.4" height="1.4" fill="#444"/><rect x="614.7" y="6" width="1.4" height="1.4" fill="#444"/><rect x="624.0" y="4.5" width="1" height="4.5" fill="#555"/><rect x="633.0" y="6" width="1.4" height="1.4" fill="#444"/><rect x="642.2" y="6" width="1.4" height="1.4" fill="#444"/><rect x="651.3" y="6" width="1.4" height="1.4" fill="#444"/><text x="661.2" y="10.5" font-family="Liberation Sans" font-size="10" fill="#444" text-anchor="middle">4</text><rect x="669.7" y="6" width="1.4" height="1.4" fill="#444"/><rect x="678.8" y="6" width="1.4" height="1.4" fill="#444"/><rect x="688.0" y="6" width="1.4" height="1.4" fill="#444"/><rect x="697.3" y="4.5" width="1" height="4.5" fill="#555"/><rect x="706.3" y="6" width="1.4" height="1.4" fill="#444"/><rect x="715.5" y="6" width="1.4" height="1.4" fill="#444"/><rect x="724.6" y="6" width="1.4" height="1.4" fill="#444"/></svg>
<svg style="left:234px;top:172px" width="14" height="552" viewBox="0 0 14 552" id="vr"><rect x="6.3" y="9.1" width="1.4" height="1.4" fill="#444"/><rect x="5" y="18.4" width="4.5" height="1" fill="#555"/><rect x="6.3" y="27.4" width="1.4" height="1.4" fill="#444"/><rect x="6.3" y="36.6" width="1.4" height="1.4" fill="#444"/><rect x="6.3" y="45.7" width="1.4" height="1.4" fill="#444"/><text x="0" y="0" transform="translate(10.5,55.6) rotate(-90)" font-family="Liberation Sans" font-size="10" fill="#444" text-anchor="middle">3</text><rect x="6.3" y="64.1" width="1.4" height="1.4" fill="#444"/><rect x="6.3" y="73.2" width="1.4" height="1.4" fill="#444"/><rect x="6.3" y="82.4" width="1.4" height="1.4" fill="#444"/><rect x="5" y="91.8" width="4.5" height="1" fill="#555"/><rect x="6.3" y="100.7" width="1.4" height="1.4" fill="#444"/><rect x="6.3" y="109.9" width="1.4" height="1.4" fill="#444"/><rect x="6.3" y="119.0" width="1.4" height="1.4" fill="#444"/><text x="0" y="0" transform="translate(10.5,128.9) rotate(-90)" font-family="Liberation Sans" font-size="10" fill="#444" text-anchor="middle">2</text><rect x="6.3" y="137.4" width="1.4" height="1.4" fill="#444"/><rect x="6.3" y="146.5" width="1.4" height="1.4" fill="#444"/><rect x="6.3" y="155.7" width="1.4" height="1.4" fill="#444"/><rect x="5" y="165.1" width="4.5" height="1" fill="#555"/><rect x="6.3" y="174.0" width="1.4" height="1.4" fill="#444"/><rect x="6.3" y="183.2" width="1.4" height="1.4" fill="#444"/><rect x="6.3" y="192.3" width="1.4" height="1.4" fill="#444"/><text x="0" y="0" transform="translate(10.5,202.2) rotate(-90)" font-family="Liberation Sans" font-size="10" fill="#444" text-anchor="middle">1</text><rect x="6.3" y="210.7" width="1.4" height="1.4" fill="#444"/><rect x="6.3" y="219.8" width="1.4" height="1.4" fill="#444"/><rect x="6.3" y="229.0" width="1.4" height="1.4" fill="#444"/><rect x="5" y="238.3" width="4.5" height="1" fill="#555"/><rect x="6.3" y="247.3" width="1.4" height="1.4" fill="#444"/><rect x="6.3" y="256.5" width="1.4" height="1.4" fill="#444"/><rect x="6.3" y="265.6" width="1.4" height="1.4" fill="#444"/><text x="0" y="0" transform="translate(10.5,275.5) rotate(-90)" font-family="Liberation Sans" font-size="10" fill="#444" text-anchor="middle">0</text><rect x="6.3" y="284.0" width="1.4" height="1.4" fill="#444"/><rect x="6.3" y="293.1" width="1.4" height="1.4" fill="#444"/><rect x="6.3" y="302.3" width="1.4" height="1.4" fill="#444"/><rect x="5" y="311.6" width="4.5" height="1" fill="#555"/><rect x="6.3" y="320.6" width="1.4" height="1.4" fill="#444"/><rect x="6.3" y="329.8" width="1.4" height="1.4" fill="#444"/><rect x="6.3" y="338.9" width="1.4" height="1.4" fill="#444"/><text x="0" y="0" transform="translate(10.5,348.8) rotate(-90)" font-family="Liberation Sans" font-size="10" fill="#444" text-anchor="middle">1</text><rect x="6.3" y="357.3" width="1.4" height="1.4" fill="#444"/><rect x="6.3" y="366.4" width="1.4" height="1.4" fill="#444"/><rect x="6.3" y="375.6" width="1.4" height="1.4" fill="#444"/><rect x="5" y="384.9" width="4.5" height="1" fill="#555"/><rect x="6.3" y="393.9" width="1.4" height="1.4" fill="#444"/><rect x="6.3" y="403.1" width="1.4" height="1.4" fill="#444"/><rect x="6.3" y="412.2" width="1.4" height="1.4" fill="#444"/><text x="0" y="0" transform="translate(10.5,422.1) rotate(-90)" font-family="Liberation Sans" font-size="10" fill="#444" text-anchor="middle">2</text><rect x="6.3" y="430.6" width="1.4" height="1.4" fill="#444"/><rect x="6.3" y="439.7" width="1.4" height="1.4" fill="#444"/><rect x="6.3" y="448.9" width="1.4" height="1.4" fill="#444"/><rect x="5" y="458.2" width="4.5" height="1" fill="#555"/><rect x="6.3" y="467.2" width="1.4" height="1.4" fill="#444"/><rect x="6.3" y="476.4" width="1.4" height="1.4" fill="#444"/><rect x="6.3" y="485.5" width="1.4" height="1.4" fill="#444"/><text x="0" y="0" transform="translate(10.5,495.4) rotate(-90)" font-family="Liberation Sans" font-size="10" fill="#444" text-anchor="middle">3</text><rect x="6.3" y="503.9" width="1.4" height="1.4" fill="#444"/><rect x="6.3" y="513.0" width="1.4" height="1.4" fill="#444"/><rect x="6.3" y="522.2" width="1.4" height="1.4" fill="#444"/><rect x="5" y="531.5" width="4.5" height="1" fill="#555"/><rect x="6.3" y="540.5" width="1.4" height="1.4" fill="#444"/></svg>
<!-- triangle artifact -->
<svg style="left:256px;top:156px" width="40" height="12" viewBox="0 0 40 12"><path d="M0 1.5 L32 1 L0 7Z" fill="#B4CDEE" opacity=".7"/></svg>
<!-- right scrollbar -->
<div class="a" style="left:1462px;top:158px;width:13px;height:536px;background:linear-gradient(90deg,#B5CDEB 0,#B5CDEB 1px,#7E9FD0 2px,#7898CB 100%)"></div>
<svg style="left:1465px;top:164px" width="9" height="5" viewBox="0 0 9 5"><path d="M0 5 L4.5 0 L9 5Z" fill="#3A5686"/></svg>
<svg style="left:1465px;top:683px" width="9" height="5" viewBox="0 0 9 5"><path d="M0 0 L4.5 5 L9 0Z" fill="#3A5686"/></svg>
<div class="a" style="left:1463px;top:369px;width:12px;height:18px;border:1px solid #4F6488;border-radius:1px;background:linear-gradient(90deg,#DDE3EC,#F2F5F9 40%,#C8D2DF)"></div>
<svg style="left:1466px;top:374px" width="8" height="8" viewBox="0 0 8 8"><path d="M0 1 H8 M0 3 H8 M0 5 H8 M0 7 H8" stroke="#8C96A6"/></svg>
<div class="a" style="left:1462px;top:694px;width:13px;height:44px;background:#BAD2EF;border-left:1px solid #D2E2F6"></div>
<svg style="left:1465px;top:698px" width="9" height="24" viewBox="0 0 9 24" fill="#111"><path d="M0.5 4.5 L4.5 0.5 L8.5 4.5Z M0.5 9.5 L4.5 5.5 L8.5 9.5Z M0.5 14 L4.5 18 L8.5 14Z M0.5 19 L4.5 23 L8.5 19Z"/></svg>
<!-- band between main and notes -->
<div class="a" style="left:229px;top:738px;width:1246px;height:5px;background:linear-gradient(#B9D3F2,#A7C4EA);border-bottom:1px solid #8EAED8"></div>
<!-- notes scrollbar -->
<div class="a" style="left:1462px;top:743px;width:13px;height:35px;background:linear-gradient(90deg,#A9C3E8,#98B5E0)"></div>
<svg style="left:1465px;top:749px" width="9" height="24" viewBox="0 0 9 24" fill="#9BB0CE"><path d="M0.5 5 L4.5 1 L8.5 5Z M0.5 19 L4.5 23 L8.5 19Z"/></svg>

<div id="slide" class="a">
<div class="a st" style="transform:scaleX(0.905)">What is a JDBC Driver?</div>
<div class="a bl" style="top:135.0px">&#8226;</div>
<div class="a bl" style="top:201.0px">&#8226;</div>
<div class="a bl" style="top:267.0px">&#8226;</div>
<div class="a bl" style="top:303.5px">&#8226;</div>
<div class="a bl" style="top:340.0px">&#8226;</div>
<div class="a bl" style="top:376.0px">&#8226;</div>
<div class="a bl" style="top:412.5px">&#8226;</div>
<div class="a sl" style="left:72.40px;top:133px;transform:scaleX(0.9700)">A</div>
<div class="a sl" style="left:93.40px;top:133px;font-weight:bold;transform:scaleX(0.8800)">JDBC Driver</div>
<div class="a sl" style="left:230.02px;top:133px;transform:scaleX(0.9880)">is a software component that enables a</div>
<div class="a sl" style="left:71.43px;top:163px;transform:scaleX(0.9747)">Java application to connect to a database.</div>
<div class="a sl" style="left:72.20px;top:199px;font-weight:bold;transform:scaleX(0.8174)">JDBC</div>
<div class="a sl" style="left:133.41px;top:199px;transform:scaleX(0.9856)">stands for</div>
<div class="a sl" style="left:249.60px;top:199px;font-weight:bold;transform:scaleX(0.9166)">Java Database Connectivity</div>
<div class="a sl" style="left:569.50px;top:199px;transform:scaleX(0.9292)">&#8212; an API</div>
<div class="a sl" style="left:71.28px;top:229px;transform:scaleX(1.0108)">provided by</div>
<div class="a sl" style="left:209.30px;top:229px;font-weight:bold;transform:scaleX(0.8491)">Java</div>
<div class="a sl" style="left:264.60px;top:229px;transform:scaleX(0.9740)">that allows Java programs to:</div>
<div class="a sl" style="left:71.43px;top:265px;transform:scaleX(0.9706)">Connect to a database</div>
<div class="a sl" style="left:70.52px;top:301.5px;transform:scaleX(0.9395)">Execute SQL queries</div>
<div class="a sl" style="left:70.45px;top:338px;transform:scaleX(0.9731)">Retrieve and update data</div>
<div class="a sl" style="left:70.45px;top:374px;transform:scaleX(0.9744)">Handle database transactions</div>
<div class="a sl" style="left:71.49px;top:410.5px;transform:scaleX(0.9138)">The JDBC driver acts as a</div>
<div class="a sl" style="left:352.34px;top:410.5px;font-weight:bold;transform:scaleX(0.9288)">bridge between Java</div>
<div class="a sl" style="left:71.46px;top:440px;font-weight:bold;transform:scaleX(0.9387)">applications and the database</div>
<div class="a sl" style="left:414.66px;top:440px;transform:scaleX(0.9700)">.</div>
</div>
<div id="notes" class="a"></div>
<div id="status" class="a"></div>
<!-- status bar bits -->
<div class="a" style="left:1241px;top:780px;width:52px;height:8px;border:1px solid #A3B6D0;border-radius:2px;background:#E2ECF8"></div>
<div class="a" style="left:1330px;top:780px;width:11px;height:11px;border:1px solid #5D6F8C;border-radius:50%"></div>
<div class="a" style="left:1379px;top:780px;width:6px;height:8px;border:1px solid #5D6F8C"></div>
<div class="a" style="left:1440px;top:780px;width:11px;height:11px;border:1px solid #5D6F8C;border-radius:50%"></div>

<div class="a tx" style="left:615.6px;top:5.5px;font-size:15px;color:#3B3830;transform:scaleX(0.880)">SERVLETS+JDBC - Microsoft PowerPoint</div>
<div class="a tx" style="left:50.5px;top:30.9px;font-size:10.5px;color:#1E3F73;transform:scaleX(0.982)">Home</div>
<div class="a tx" style="left:105.5px;top:30.9px;font-size:10.5px;color:#1E3F73;transform:scaleX(0.867)">WPS PDF</div>
<div class="a tx" style="left:173.8px;top:30.9px;font-size:10.5px;color:#1E3F73;transform:scaleX(0.998)">Insert</div>
<div class="a tx" style="left:228.7px;top:30.9px;font-size:10.5px;color:#1E3F73;transform:scaleX(1.010)">Design</div>
<div class="a tx" style="left:288.8px;top:30.9px;font-size:10.5px;color:#1E3F73;transform:scaleX(1.036)">Animations</div>
<div class="a tx" style="left:368.8px;top:30.9px;font-size:10.5px;color:#1E3F73;transform:scaleX(1.013)">Slide Show</div>
<div class="a tx" style="left:449.4px;top:30.9px;font-size:10.5px;color:#1E3F73;transform:scaleX(0.984)">Review</div>
<div class="a tx" style="left:509.8px;top:30.9px;font-size:10.5px;color:#1E3F73;transform:scaleX(1.014)">View</div>
<div class="a tx" style="left:9.0px;top:86.7px;font-size:10.5px;color:#1B3A6B;transform:scaleX(0.894)">Paste</div>
<div class="a tx" style="left:62.0px;top:54.9px;font-size:10.5px;color:#1B3A6B;transform:scaleX(0.979)">Cut</div>
<div class="a tx" style="left:62.0px;top:75.4px;font-size:10.5px;color:#1B3A6B;transform:scaleX(0.979)">Copy</div>
<div class="a tx" style="left:62.0px;top:95.5px;font-size:10.5px;color:#1B3A6B;transform:scaleX(0.993)">Format Painter</div>
<div class="a tx" style="left:36.8px;top:114.1px;font-size:10.5px;color:#3F6196;transform:scaleX(1.037)">Clipboard</div>
<div class="a tx" style="left:153.0px;top:86.6px;font-size:10.5px;color:#1B3A6B;transform:scaleX(0.999)">New</div>
<div class="a tx" style="left:149.0px;top:98.7px;font-size:10.5px;color:#1B3A6B;transform:scaleX(0.985)">Slide</div>
<div class="a tx" style="left:204.0px;top:54.8px;font-size:10.5px;color:#1B3A6B;transform:scaleX(1.015)">Layout</div>
<div class="a tx" style="left:204.0px;top:75.7px;font-size:10.5px;color:#1B3A6B;transform:scaleX(0.948)">Reset</div>
<div class="a tx" style="left:204.0px;top:96.6px;font-size:10.5px;color:#1B3A6B;transform:scaleX(1.021)">Delete</div>
<div class="a tx" style="left:183.5px;top:114.6px;font-size:10.5px;color:#3F6196;transform:scaleX(0.961)">Slides</div>
<div class="a tx" style="left:340.2px;top:114.1px;font-size:10.5px;color:#3F6196;transform:scaleX(1.033)">Font</div>
<div class="a tx" style="left:572.0px;top:114.8px;font-size:10.5px;color:#3F6196;transform:scaleX(0.973)">Paragraph</div>
<div class="a tx" style="left:632.0px;top:54.9px;font-size:10.5px;color:#8E9CAE;transform:scaleX(1.016)">Text Direction</div>
<div class="a tx" style="left:632.0px;top:75.1px;font-size:10.5px;color:#8E9CAE;transform:scaleX(1.014)">Align Text</div>
<div class="a tx" style="left:632.0px;top:95.5px;font-size:10.5px;color:#8E9CAE;transform:scaleX(1.002)">Convert to SmartArt</div>
<div class="a tx" style="left:881.0px;top:86.6px;font-size:10.5px;color:#1B3A6B;transform:scaleX(0.990)">Arrange</div>
<div class="a tx" style="left:927.0px;top:86.6px;font-size:10.5px;color:#8E9CAE;transform:scaleX(0.969)">Quick</div>
<div class="a tx" style="left:924.0px;top:98.6px;font-size:10.5px;color:#8E9CAE;transform:scaleX(0.909)">Styles</div>
<div class="a tx" style="left:981.0px;top:54.8px;font-size:10.5px;color:#8E9CAE;transform:scaleX(0.985)">Shape Fill</div>
<div class="a tx" style="left:981.0px;top:75.1px;font-size:10.5px;color:#8E9CAE;transform:scaleX(1.022)">Shape Outline</div>
<div class="a tx" style="left:981.0px;top:95.4px;font-size:10.5px;color:#8E9CAE;transform:scaleX(0.982)">Shape Effects</div>
<div class="a tx" style="left:876.5px;top:113.7px;font-size:10.5px;color:#3F6196;transform:scaleX(1.039)">Drawing</div>
<div class="a tx" style="left:1094.0px;top:54.6px;font-size:10.5px;color:#1B3A6B;transform:scaleX(0.979)">Find</div>
<div class="a tx" style="left:1094.0px;top:75.4px;font-size:10.5px;color:#1B3A6B;transform:scaleX(0.934)">Replace</div>
<div class="a tx" style="left:1094.0px;top:95.6px;font-size:10.5px;color:#1B3A6B;transform:scaleX(0.925)">Select</div>
<div class="a tx" style="left:1092.0px;top:114.4px;font-size:10.5px;color:#3F6196;transform:scaleX(1.028)">Editing</div>
<div class="a tx" style="left:1158.0px;top:86.4px;font-size:10.5px;color:#1B3A6B;transform:scaleX(0.952)">Create</div>
<div class="a tx" style="left:1163.0px;top:97.9px;font-size:10.5px;color:#1B3A6B;transform:scaleX(0.905)">PDF</div>
<div class="a tx" style="left:1201.0px;top:86.4px;font-size:10.5px;color:#1B3A6B;transform:scaleX(0.999)">Sign</div>
<div class="a tx" style="left:1172.0px;top:114.1px;font-size:10.5px;color:#3F6196;transform:scaleX(0.878)">WPS PDF</div>
<div class="a tx" style="left:2.0px;top:135.3px;font-size:11.5px;color:#15396E;font-weight:bold;transform:scaleX(0.876)">Slides</div>
<div class="a tx" style="left:56.0px;top:135.3px;font-size:11.5px;color:#15396E;transform:scaleX(0.988)">Outline</div>
<div class="a tx" style="left:240.0px;top:749.5px;font-size:16px;color:#222;transform:scaleX(0.907)">Click to add notes</div>
<div class="a tx" style="left:41.0px;top:322.8px;font-size:10.5px;color:#1a1a1a;-webkit-text-stroke:0.1px #1a1a1a;transform:scaleX(0.972)">Configure web.xml (If Needed)</div>
<div class="a tx" style="left:28.8px;top:344.7px;font-size:6.5px;color:#1a1a1a;-webkit-text-stroke:0.15px #1a1a1a;transform:scaleX(1.047)">&lt;servlet&gt;</div>
<div class="a tx" style="left:36.8px;top:353.7px;font-size:6.5px;color:#1a1a1a;-webkit-text-stroke:0.15px #1a1a1a;transform:scaleX(1.058)">&lt;servlet-name&gt;StudentServlet&lt;/servlet-name&gt;</div>
<div class="a tx" style="left:36.8px;top:363.2px;font-size:6.5px;color:#1a1a1a;-webkit-text-stroke:0.15px #1a1a1a;transform:scaleX(1.045)">&lt;servlet-class&gt;StudentServlet&lt;/servlet-class&gt;</div>
<div class="a tx" style="left:28.8px;top:372.4px;font-size:6.5px;color:#1a1a1a;-webkit-text-stroke:0.15px #1a1a1a;transform:scaleX(1.086)">&lt;/servlet&gt;</div>
<div class="a tx" style="left:28.8px;top:391.0px;font-size:6.5px;color:#1a1a1a;-webkit-text-stroke:0.15px #1a1a1a;transform:scaleX(1.036)">&lt;servlet-mapping&gt;</div>
<div class="a tx" style="left:36.8px;top:400.2px;font-size:6.5px;color:#1a1a1a;-webkit-text-stroke:0.15px #1a1a1a;transform:scaleX(1.058)">&lt;servlet-name&gt;StudentServlet&lt;/servlet-name&gt;</div>
<div class="a tx" style="left:36.8px;top:409.7px;font-size:6.5px;color:#1a1a1a;-webkit-text-stroke:0.15px #1a1a1a;transform:scaleX(1.097)">&lt;url-pattern&gt;/StudentServlet&lt;/url-pattern&gt;</div>
<div class="a tx" style="left:28.8px;top:418.7px;font-size:6.5px;color:#1a1a1a;-webkit-text-stroke:0.15px #1a1a1a;transform:scaleX(1.064)">&lt;/servlet-mapping&gt;</div>
<div class="a tx" style="left:68.4px;top:468.9px;font-size:9px;color:#1a1a1a;font-weight:bold;transform:scaleX(0.948)">STEP 8: Run Project</div>
<div class="a tx" style="left:36.4px;top:497.2px;font-size:7px;color:#1a1a1a;transform:scaleX(1.115)">Right-click project</div>
<div class="a tx" style="left:29.0px;top:497.2px;font-size:7px;color:#1a1a1a;transform:scaleX(1.019)">&#8226;</div>
<div class="a tx" style="left:36.4px;top:509.1px;font-size:7px;color:#1a1a1a;transform:scaleX(1.071)">Run As &#8594; Run on Server</div>
<div class="a tx" style="left:29.0px;top:509.1px;font-size:7px;color:#1a1a1a;transform:scaleX(1.019)">&#8226;</div>
<div class="a tx" style="left:36.4px;top:521.2px;font-size:7px;color:#1a1a1a;transform:scaleX(1.079)">Select Tomcat</div>
<div class="a tx" style="left:29.0px;top:521.2px;font-size:7px;color:#1a1a1a;transform:scaleX(1.019)">&#8226;</div>
<div class="a tx" style="left:36.4px;top:533.2px;font-size:7px;color:#1a1a1a;transform:scaleX(1.036)">Click Finish</div>
<div class="a tx" style="left:29.0px;top:533.2px;font-size:7px;color:#1a1a1a;transform:scaleX(1.019)">&#8226;</div>
<div class="a tx" style="left:63.6px;top:619.4px;font-size:9.5px;color:#1a1a1a;font-weight:bold;transform:scaleX(0.902)">What is a JDBC Driver?</div>
<div class="a tx" style="left:36.4px;top:648.0px;font-size:5.8px;color:#222;transform:scaleX(1.077)">A JDBC Driver  is a software component that enables  a</div>
<div class="a tx" style="left:29.1px;top:648.2px;font-size:5.6px;color:#222;transform:scaleX(1.016)">&#8226;</div>
<div class="a tx" style="left:36.4px;top:655.3px;font-size:5.8px;color:#222;transform:scaleX(1.046)">Java application  to connect to a database.</div>
<div class="a tx" style="left:36.4px;top:664.3px;font-size:5.8px;color:#222;transform:scaleX(1.055)">JDBC stands for Java Database  Connectivity &#8212; an API</div>
<div class="a tx" style="left:29.1px;top:664.5px;font-size:5.6px;color:#222;transform:scaleX(1.016)">&#8226;</div>
<div class="a tx" style="left:36.4px;top:672.0px;font-size:5.8px;color:#222;transform:scaleX(1.081)">provided by Java  that allows Java programs  to:</div>
<div class="a tx" style="left:36.4px;top:681.2px;font-size:5.8px;color:#222;transform:scaleX(1.004)">Connect to a database</div>
<div class="a tx" style="left:29.1px;top:681.4px;font-size:5.6px;color:#222;transform:scaleX(1.016)">&#8226;</div>
<div class="a tx" style="left:36.4px;top:690.5px;font-size:5.8px;color:#222;transform:scaleX(0.989)">Execute SQL queries</div>
<div class="a tx" style="left:29.1px;top:690.7px;font-size:5.6px;color:#222;transform:scaleX(1.016)">&#8226;</div>
<div class="a tx" style="left:36.4px;top:700.1px;font-size:5.8px;color:#222;transform:scaleX(1.049)">Retrieve  and update data</div>
<div class="a tx" style="left:29.1px;top:700.3px;font-size:5.6px;color:#222;transform:scaleX(1.016)">&#8226;</div>
<div class="a tx" style="left:36.4px;top:709.3px;font-size:5.8px;color:#222;transform:scaleX(1.040)">Handle database  transactions</div>
<div class="a tx" style="left:29.1px;top:709.5px;font-size:5.6px;color:#222;transform:scaleX(1.016)">&#8226;</div>
<div class="a tx" style="left:36.4px;top:718.5px;font-size:5.8px;color:#222;transform:scaleX(1.039)">The JDBC driver acts as a bridge between Java</div>
<div class="a tx" style="left:29.1px;top:718.7px;font-size:5.6px;color:#222;transform:scaleX(1.016)">&#8226;</div>
<div class="a tx" style="left:36.4px;top:725.9px;font-size:5.8px;color:#222;transform:scaleX(1.076)">applications and the database.</div>
</body></html>
